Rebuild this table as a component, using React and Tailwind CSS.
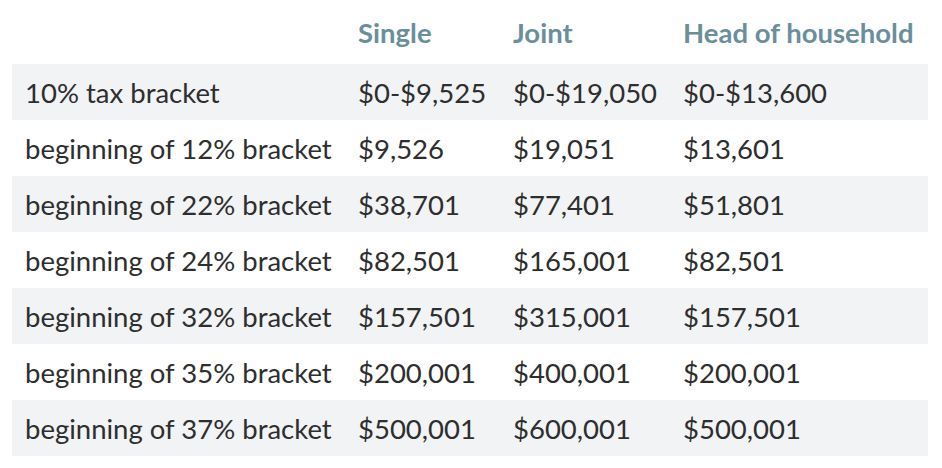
const rows = [
  ["10% tax bracket", "$0-$9,525", "$0-$19,050", "$0-$13,600"],
  ["beginning of 12% bracket", "$9,526", "$19,051", "$13,601"],
  ["beginning of 22% bracket", "$38,701", "$77,401", "$51,801"],
  ["beginning of 24% bracket", "$82,501", "$165,001", "$82,501"],
  ["beginning of 32% bracket", "$157,501", "$315,001", "$157,501"],
  ["beginning of 35% bracket", "$200,001", "$400,001", "$200,001"],
  ["beginning of 37% bracket", "$500,001", "$600,001", "$500,001"],
];

export default function App() {
  return (
    <div className="w-[942px] h-[468px] bg-white pl-3" style={{ fontFamily: "Lato, 'Noto Sans', sans-serif" }}>
      <table className="w-[916px] border-collapse table-fixed text-[27.5px] leading-[33px] text-[#2e2e2e]">
        <colgroup>
          <col className="w-[334px]" />
          <col className="w-[155px]" />
          <col className="w-[170px]" />
          <col />
        </colgroup>
        <thead>
          <tr className="h-16">
            <th></th>
            <th className="text-left align-bottom font-bold text-[#6a8f9b] px-3 pb-[15px]">Single</th>
            <th className="text-left align-bottom font-bold text-[#6a8f9b] px-3 pb-[15px]">Joint</th>
            <th className="text-left align-bottom font-bold text-[#6a8f9b] pl-3 pb-[15px] whitespace-nowrap">Head of household</th>
          </tr>
        </thead>
        <tbody>
          {rows.map((r, i) => (
            <tr key={i} className={`h-14 ${i % 2 === 0 ? "bg-[#f2f3f5]" : "bg-white"}`}>
              {r.map((c, j) => (
                <td key={j} className={`${j === 0 ? "pl-[13px]" : "pl-3"} pr-2 whitespace-nowrap`}>{c}</td>
              ))}
            </tr>
          ))}
        </tbody>
      </table>
    </div>
  );
}
